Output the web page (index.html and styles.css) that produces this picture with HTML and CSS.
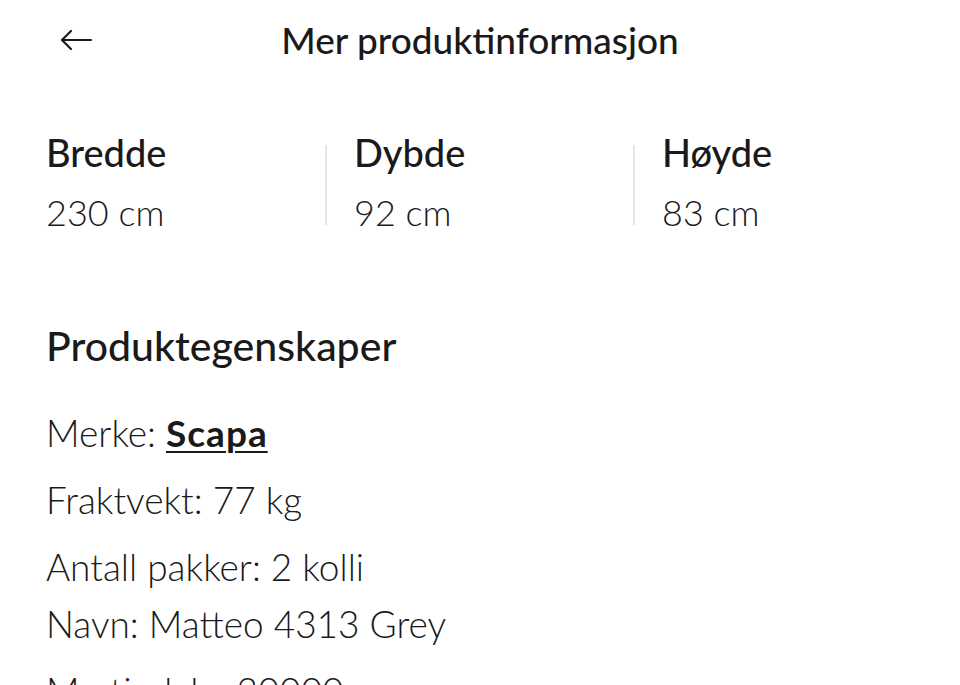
FILE: index.html
```html
<!DOCTYPE html>
<html lang="nb">
<head>
    <meta charset="UTF-8">
    <meta name="viewport" content="width=device-width, initial-scale=1.0">
    <title>Mer produktinformasjon</title>
    <link rel="stylesheet" href="styles.css">
</head>
<body>
    <header class="top-bar">
        <button class="back-button" aria-label="Tilbake">
            <svg width="34" height="24" viewBox="0 0 34 24" fill="none" stroke="#1a1a1a" stroke-width="2.2" stroke-linecap="round" stroke-linejoin="round">
                <path d="M32 12H3"/>
                <path d="M12 3L3 12l9 9"/>
            </svg>
        </button>
        <h1 class="page-title">Mer produktinformasjon</h1>
    </header>

    <section class="dimensions">
        <div class="dimension">
            <div class="dimension-label">Bredde</div>
            <div class="dimension-value">230 cm</div>
        </div>
        <div class="dimension">
            <div class="dimension-label">Dybde</div>
            <div class="dimension-value">92 cm</div>
        </div>
        <div class="dimension">
            <div class="dimension-label">Høyde</div>
            <div class="dimension-value">83 cm</div>
        </div>
    </section>

    <section class="properties">
        <h2>Produktegenskaper</h2>
        <p class="prop">Merke: <a href="#">Scapa</a></p>
        <p class="prop">Fraktvekt: 77 kg</p>
        <p class="prop tight">Antall pakker: 2 kolli</p>
        <p class="prop">Navn: Matteo 4313 Grey</p>
        <p class="prop">Martindale: 30000</p>
    </section>
</body>
</html>
```

FILE: styles.css
```css
body {
    margin: 0;
    font-family: Lato, "Noto Sans", sans-serif;
    color: #1a1a1a;
    background-color: #ffffff;
    height: 685px;
    overflow: hidden;
}
.top-bar {
    position: relative;
    display: flex;
    justify-content: center;
    align-items: center;
    height: 84px;
}
.back-button {
    position: absolute;
    left: 59px;
    top: 28px;
    padding: 0;
    border: none;
    background: none;
    cursor: pointer;
}
.page-title {
    margin: -4px 0 0;
    font-size: 37px;
    font-weight: 500;
    line-height: 44px;
}
.dimensions {
    display: grid;
    grid-template-columns: 279px 308px 1fr;
    padding: 61px 0 0 46px;
}
.dimension + .dimension {
    border-left: 2px solid #e6e6e6;
    padding-left: 27px;
}
.dimension-label {
    font-size: 38px;
    font-weight: 500;
    line-height: 26px;
    margin-top: -6px;
}
.dimension-value {
    font-size: 36px;
    font-weight: 300;
    line-height: 26px;
    margin-top: 34px;
}
.properties {
    padding: 0 46px;
    margin-top: 97px;
}
.properties h2 {
    margin: 0 0 43px;
    font-size: 41px;
    font-weight: 500;
    line-height: 48px;
}
.prop {
    margin: 0 0 27px;
    font-size: 37px;
    font-weight: 300;
    line-height: 40px;
    white-space: nowrap;
}
.prop.tight {
    margin-bottom: 17px;
}
.prop a {
    color: #1a1a1a;
    font-weight: 700;
    letter-spacing: 1px;
    text-decoration: underline;
    text-underline-offset: 4px;
    text-decoration-thickness: 2px;
}
```
